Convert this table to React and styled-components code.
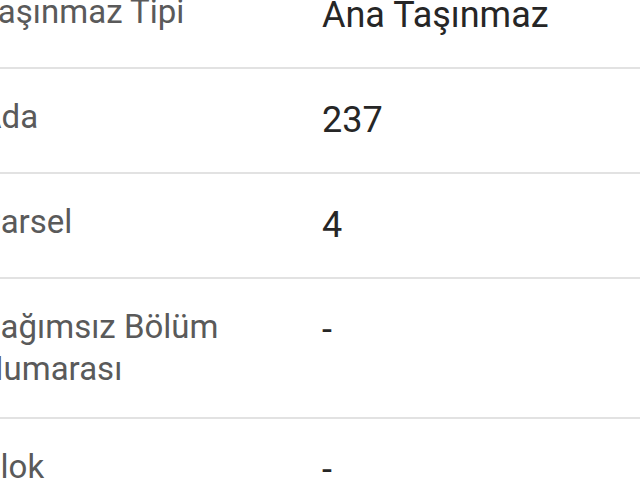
import React from "react";
import styled, { createGlobalStyle } from "styled-components";

const GlobalStyle = createGlobalStyle`
  html, body {
    margin: 0;
    padding: 0;
    background: #ffffff;
    overflow: hidden;
  }
  body {
    font-family: Roboto, "Noto Sans", Arial, sans-serif;
  }
`;

const Table = styled.div`
  display: flex;
  flex-direction: column;
  margin-top: -36px;
  margin-left: -20px;
  width: 660px;
`;

const Row = styled.div`
  display: grid;
  grid-template-columns: 342px 1fr;
  align-items: start;
  padding: 27px 0;
  border-bottom: 2px solid #e2e2e2;
`;

const Label = styled.div`
  font-size: 33px;
  line-height: 42px;
  color: #5a5a5a;
  padding-right: 20px;
`;

const Value = styled.div`
  font-size: 36px;
  line-height: 49px;
  color: #262626;
`;

const rows = [
  { label: "Taşınmaz Tipi", value: "Ana Taşınmaz" },
  { label: "Ada", value: "237" },
  { label: "Parsel", value: "4" },
  { label: "Bağımsız Bölüm Numarası", value: "-" },
  { label: "Blok", value: "-" },
];

const App = () => {
  return (
    <>
      <GlobalStyle />
      <Table>
        {rows.map((row) => (
          <Row key={row.label}>
            <Label>{row.label}</Label>
            <Value>{row.value}</Value>
          </Row>
        ))}
      </Table>
    </>
  );
};

export default App;
